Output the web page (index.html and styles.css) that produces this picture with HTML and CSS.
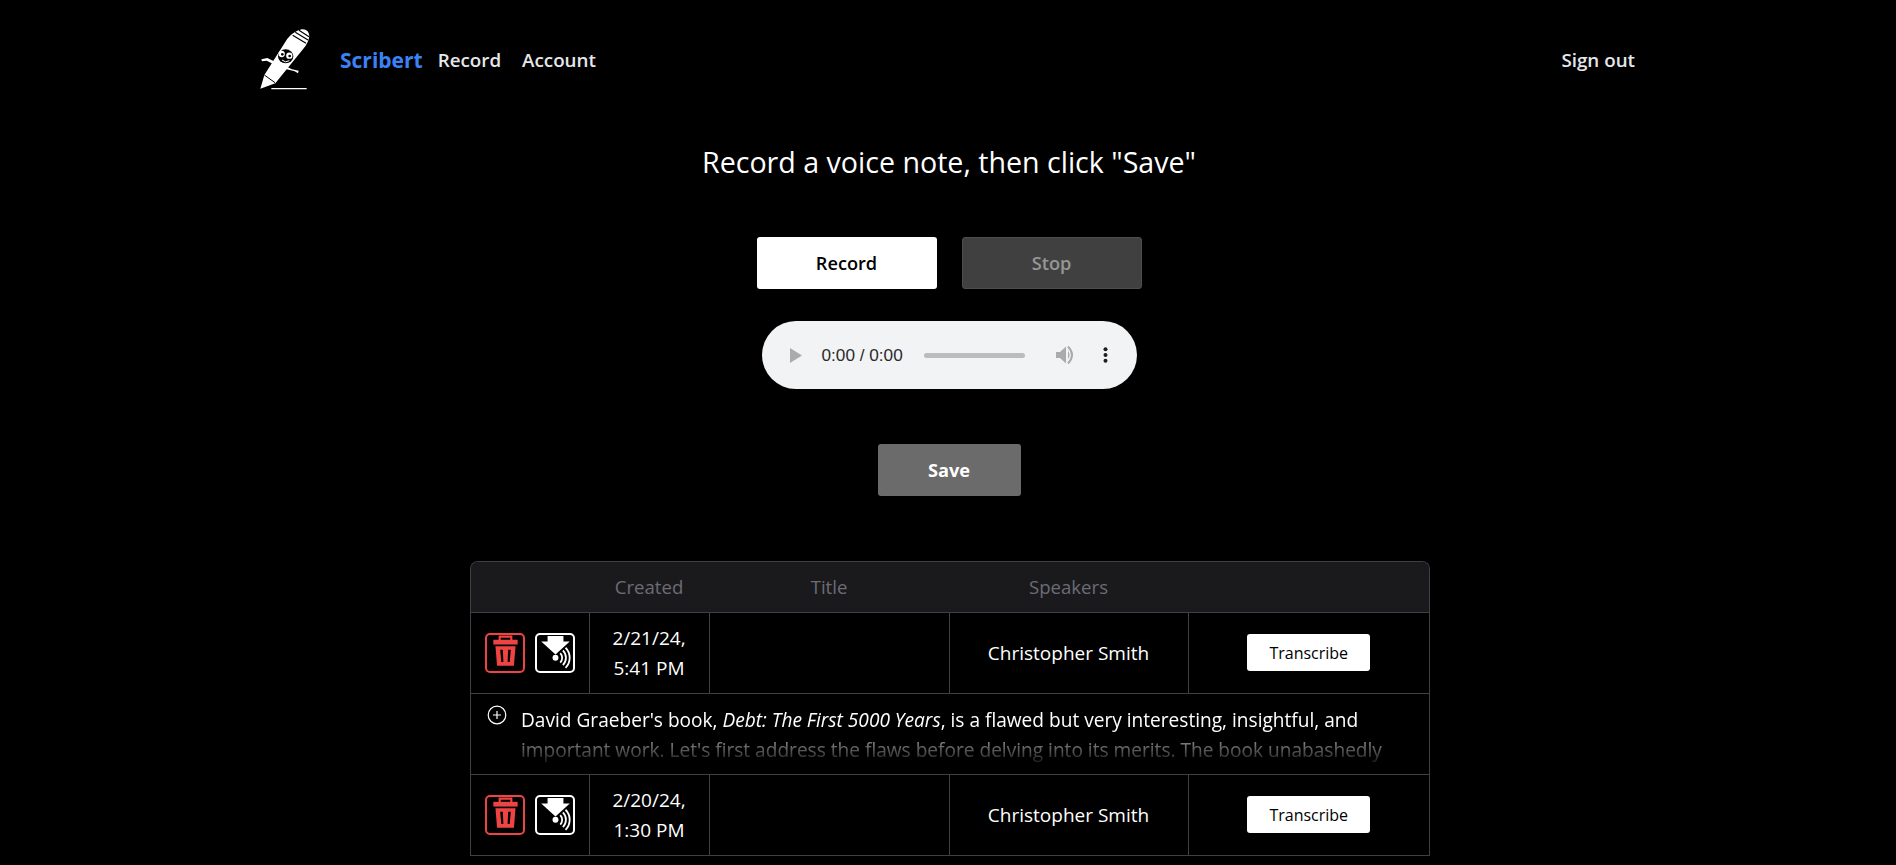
FILE: index.html
```html
<!DOCTYPE html>
<html lang="en">
<head>
    <meta charset="UTF-8">
    <meta name="viewport" content="width=device-width, initial-scale=1.0">
    <title>Scribert</title>
    <link rel="stylesheet" href="styles.css">
</head>
<body>

    <!-- Top navigation -->
    <nav class="nav">
        <svg class="logo" viewBox="0 0 210 225" aria-label="Scribert logo">
            <path d="M31 206 L43 165 L112 56 Q128 36 155 28 Q176 26 178 48 Q176 68 160 86 L76 190 Z" fill="#fff"/>
            <path d="M128 46 L168 70 M136 37 L174 60 M147 31 L177 50" stroke="#000" stroke-width="3.5" fill="none"/>
            <path d="M43 165 L75 188" stroke="#000" stroke-width="3" fill="none"/>
            <path d="M34 118 L52 114 L72 124 L68 131 L50 122 L36 124 Z" fill="#fff"/>
            <path d="M106 138 L126 148 L146 152 L144 160 L134 154 L104 146 Z" fill="#fff"/>
            <ellipse cx="107" cy="109" rx="23" ry="21" fill="#000"/>
            <circle cx="95" cy="102" r="9.5" fill="#fff"/>
            <circle cx="118" cy="107" r="9.5" fill="#fff"/>
            <circle cx="97" cy="103" r="4" fill="#000"/>
            <circle cx="119" cy="108" r="4" fill="#000"/>
            <path d="M96 120 Q106 130 118 122" stroke="#fff" stroke-width="3" fill="none"/>
            <path d="M64 206 H170" stroke="#fff" stroke-width="3.5" fill="none"/>
        </svg>
        <a class="brand" href="#">Scribert</a>
        <a class="nav-link" href="#">Record</a>
        <a class="nav-link" href="#">Account</a>
        <a class="nav-link sign-out" href="#">Sign out</a>
    </nav>

    <main class="page">
        <h1>Record a voice note, then click "Save"</h1>

        <div class="record-buttons">
            <button class="btn btn-white" type="button">Record</button>
            <button class="btn btn-stop" type="button">Stop</button>
        </div>

        <!-- Audio player -->
        <div class="player">
            <svg class="play" viewBox="0 0 12 15"><path d="M0 0 L12 7.5 L0 15 Z" fill="#ababab"/></svg>
            <span class="time">0:00 / 0:00</span>
            <div class="track"></div>
            <svg class="speaker" viewBox="0 0 20 20">
                <path d="M0 7 H4 L10 1.5 V18.5 L4 13 H0 Z" fill="#ababab"/>
                <path d="M12 6 Q15 10 12 14 Z" fill="#ababab"/>
                <path d="M12 1.5 Q20 10 12 18.5" stroke="#ababab" stroke-width="2" fill="none"/>
            </svg>
            <svg class="dots" viewBox="0 0 5 16">
                <circle cx="2.5" cy="2.2" r="2" fill="#1f1f1f"/>
                <circle cx="2.5" cy="8" r="2" fill="#1f1f1f"/>
                <circle cx="2.5" cy="13.8" r="2" fill="#1f1f1f"/>
            </svg>
        </div>

        <button class="btn btn-save" type="button">Save</button>

        <div class="table-wrap">
            <table class="notes">
                <colgroup>
                    <col class="col-actions">
                    <col class="col-created">
                    <col class="col-title">
                    <col class="col-speakers">
                    <col class="col-transcribe">
                </colgroup>
                <thead>
                    <tr>
                        <th></th>
                        <th>Created</th>
                        <th>Title</th>
                        <th>Speakers</th>
                        <th></th>
                    </tr>
                </thead>
                <tbody>
                    <tr>
                        <td class="actions">
                            <div class="icon-row">
                                <button class="icon-btn icon-red" type="button" aria-label="Delete">
                                    <svg viewBox="0 0 35 35"><use href="#trash"/></svg>
                                </button>
                                <button class="icon-btn" type="button" aria-label="Download">
                                    <svg viewBox="0 0 35 35"><use href="#download"/></svg>
                                </button>
                            </div>
                        </td>
                        <td>2/21/24,<br>5:41 PM</td>
                        <td></td>
                        <td>Christopher Smith</td>
                        <td><button class="btn-transcribe" type="button">Transcribe</button></td>
                    </tr>
                    <tr>
                        <td class="summary" colspan="5">
                            <div class="summary-row">
                                <svg class="expand" viewBox="0 0 20 20">
                                    <circle cx="10" cy="10" r="8.8" stroke="#fff" stroke-width="1.2" fill="none"/>
                                    <path d="M10 6 V14 M6 10 H14" stroke="#fff" stroke-width="1.2"/>
                                </svg>
                                <p class="summary-text">David Graeber's book, <em>Debt: The First 5000 Years</em>, is a flawed but very interesting, insightful, and important work. Let's first address the flaws before delving into its merits. The book unabashedly</p>
                            </div>
                        </td>
                    </tr>
                    <tr>
                        <td class="actions">
                            <div class="icon-row">
                                <button class="icon-btn icon-red" type="button" aria-label="Delete">
                                    <svg viewBox="0 0 35 35"><use href="#trash"/></svg>
                                </button>
                                <button class="icon-btn" type="button" aria-label="Download">
                                    <svg viewBox="0 0 35 35"><use href="#download"/></svg>
                                </button>
                            </div>
                        </td>
                        <td>2/20/24,<br>1:30 PM</td>
                        <td></td>
                        <td>Christopher Smith</td>
                        <td><button class="btn-transcribe" type="button">Transcribe</button></td>
                    </tr>
                </tbody>
            </table>
        </div>
    </main>

    <!-- Shared icons -->
    <svg class="icon-defs" aria-hidden="true">
        <symbol id="trash" viewBox="0 0 35 35">
            <path d="M12 6 V2.5 H23 V6" stroke="#ef4444" stroke-width="2" fill="none"/>
            <path d="M6 5.5 H29 V10 H6 Z" fill="#ef4444"/>
            <path fill-rule="evenodd" d="M8 11.5 H27 L25.5 30 H9.5 Z M12.5 15 L13.5 26.5 H15.5 L15 15 Z M20 15 L19.5 26.5 H21.5 L22.5 15 Z" fill="#ef4444"/>
        </symbol>
        <symbol id="download" viewBox="0 0 35 35">
            <path d="M10 2 H25 V7 H31 L17.5 19.5 L4 7 H10 Z" fill="#fff"/>
            <circle cx="17.5" cy="22.5" r="2.8" fill="#fff"/>
            <path d="M22 18 A6.5 6.5 0 0 1 22 27 M24.5 15.5 A10 10 0 0 1 24.5 29.5 M27 13 A13.5 13.5 0 0 1 27 32" stroke="#fff" stroke-width="1.7" fill="none"/>
        </symbol>
    </svg>
</body>
</html>
```

FILE: styles.css
```css
* {
    box-sizing: border-box;
}
html, body {
    height: 865px;
    margin: 0;
    overflow: hidden;
}
body {
    background-color: #000;
    color: #fff;
    font-family: "Open Sans", "Noto Sans", Arial, sans-serif;
    font-size: 19px;
}
a {
    text-decoration: none;
}
.nav {
    display: flex;
    align-items: center;
    height: 120px;
    padding: 0 261px 0 250px;
}
.logo {
    width: 70px;
    height: 75px;
    margin: 0 20px 6px 0;
}
.brand {
    color: #3b82f6;
    font-size: 21px;
    font-weight: 700;
    margin-right: 15px;
}
.nav-link {
    color: #e5e7eb;
    font-size: 18.8px;
    font-weight: 600;
    margin-right: 21px;
}
.sign-out {
    margin-left: auto;
    margin-right: 0;
}
.page {
    display: flex;
    flex-direction: column;
    align-items: center;
    width: 960px;
    margin-left: 469px;
}
h1 {
    font-size: 28.6px;
    font-weight: 400;
    line-height: 38px;
    margin: 23px 0 56px;
}
.record-buttons {
    display: flex;
    gap: 25px;
    margin-bottom: 32px;
}
.btn {
    height: 52px;
    border: none;
    border-radius: 3px;
    font-family: inherit;
    font-size: 18.2px;
    font-weight: 600;
}
.btn-white {
    width: 180px;
    background-color: #fff;
    color: #000;
}
.btn-stop {
    width: 180px;
    background-color: #404040;
    border: 1px solid #4d4d4d;
    color: #969696;
}
.btn-save {
    width: 143px;
    background-color: #6b6b6b;
    color: #fff;
    font-weight: 700;
    margin-bottom: 65px;
}
.player {
    display: flex;
    align-items: center;
    width: 375px;
    height: 68px;
    padding-left: 28px;
    background-color: #f1f3f4;
    border-radius: 34px;
    margin-bottom: 55px;
}
.play {
    width: 12px;
    height: 15px;
    margin-right: 20px;
}
.time {
    color: #2b2b2b;
    font-family: "Liberation Sans", Arial, sans-serif;
    font-size: 17.2px;
    width: 102px;
}
.track {
    width: 101px;
    height: 5px;
    background-color: #bcbcbc;
    border-radius: 3px;
    margin-right: 31px;
}
.speaker {
    width: 20px;
    height: 20px;
    margin-right: 27px;
}
.dots {
    width: 5px;
    height: 16px;
}
.table-wrap {
    align-self: flex-start;
    width: 960px;
    margin-left: 1px;
    border: 1px solid #3f3f46;
    border-bottom: none;
    border-radius: 8px 8px 0 0;
    overflow: hidden;
}
.notes {
    width: 100%;
    table-layout: fixed;
    border-collapse: collapse;
}
.col-actions { width: 118px; }
.col-created { width: 120px; }
.col-title { width: 240px; }
.col-speakers { width: 239px; }
.notes th {
    height: 50px;
    background-color: #1a1a1d;
    color: #6b6c75;
    font-weight: 400;
    font-size: 18.6px;
    text-align: center;
}
.notes td {
    height: 81px;
    padding: 0;
    border: 1px solid #3f3f46;
    text-align: center;
    line-height: 30px;
}
.notes tr td:first-child {
    border-left: none;
}
.notes tr td:last-child {
    border-right: none;
}
.icon-row {
    display: flex;
    gap: 10px;
    padding-left: 14px;
}
.icon-btn {
    display: flex;
    align-items: center;
    justify-content: center;
    width: 40px;
    height: 40px;
    padding: 0;
    background: none;
    border: 2.5px solid #fff;
    border-radius: 5px;
}
.icon-red {
    border-color: #ef4444;
}
.icon-btn svg {
    flex: none;
    width: 37px;
    height: 37px;
}
.btn-transcribe {
    width: 123px;
    height: 37px;
    background-color: #fff;
    color: #000;
    border: none;
    border-radius: 3px;
    font-family: inherit;
    font-size: 16px;
}
.notes .summary {
    height: 81px;
    text-align: left;
    vertical-align: top;
}
.summary-row {
    display: flex;
    padding: 11px 12px 0 16px;
}
.expand {
    flex: none;
    width: 20px;
    height: 20px;
    margin-right: 14px;
}
.summary-text {
    margin: 0;
    height: 60px;
    font-size: 19.1px;
    overflow: hidden;
    -webkit-mask-image: linear-gradient(to bottom, #fff 48%, rgba(255, 255, 255, 0.5) 62%, rgba(255, 255, 255, 0.15) 92%);
    mask-image: linear-gradient(to bottom, #fff 48%, rgba(255, 255, 255, 0.5) 62%, rgba(255, 255, 255, 0.15) 92%);
}
.icon-defs {
    display: none;
}
```
